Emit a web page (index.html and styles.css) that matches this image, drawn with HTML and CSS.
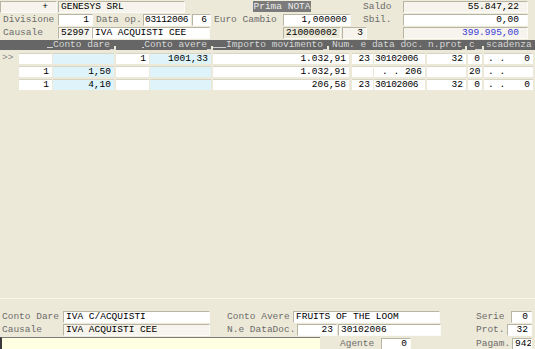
FILE: index.html
```html
<!DOCTYPE html>
<html lang="it">
<head>
    <meta charset="UTF-8">
    <title>Prima NOTA</title>
    <link rel="stylesheet" href="styles.css">
</head>
<body>
    <div class="testata">
        <!-- riga ditta -->
        <div class="riga">
            <div class="fld chiaro r w-plus">+</div>
            <div class="fld chiaro w-ditta">GENESYS SRL</div>
            <div class="titolo">Prima NOTA</div>
            <div class="lbl w-saldo">Saldo</div>
            <div class="fld chiaro r w-tot">55.847,22</div>
        </div>
        <!-- riga divisione -->
        <div class="riga">
            <div class="lbl w-lab">Divisione</div>
            <div class="fld r w-div">1</div>
            <div class="lbl w-dataop">Data op.</div>
            <div class="fld data w-data">03112006</div>
            <div class="fld r w-sei">6</div>
            <div class="lbl w-cambio">Euro Cambio</div>
            <div class="fld r w-valcambio">1,000000</div>
            <div class="lbl w-sbil">Sbil.</div>
            <div class="fld r w-tot">0,00</div>
        </div>
        <!-- riga causale -->
        <div class="riga">
            <div class="lbl w-lab">Causale</div>
            <div class="fld chiaro w-caus">52997</div>
            <div class="fld w-desc">IVA ACQUISTI CEE</div>
            <div class="fld grigio r w-conto">210000002</div>
            <div class="fld chiaro r w-tre">3</div>
            <div class="fld chiaro blu r w-tot">399.995,00</div>
        </div>
    </div>

    <!-- intestazione griglia -->
    <div class="intest">
        <div class="seg seg-a"><i></i><span>Conto dare</span><b></b></div>
        <div class="seg seg-b"><i></i><span>Conto avere</span><b></b></div>
        <div class="seg seg-c"><i></i><span>Importo movimento</span><b></b></div>
        <div class="seg seg-d"><span>Num. e data doc.</span></div>
        <div class="seg seg-e"><span>n.prot</span><b></b></div>
        <div class="seg seg-f"><span>c</span><b></b></div>
        <div class="seg seg-g"><span>scadenza</span></div>
    </div>

    <!-- righe movimenti -->
    <div class="griglia">
        <div class="grow">
            <div class="gut">&gt;&gt;</div>
            <div class="cell c1 r"></div>
            <div class="cell cy c2 r"></div>
            <div class="cell c3 r">1</div>
            <div class="cell cy c4 r">1001,33</div>
            <div class="cell c5 r">1.032,91</div>
            <div class="cell c6 r">23</div>
            <div class="cell data c7">30102006</div>
            <div class="cell c8 r">32</div>
            <div class="cell c9 r">0</div>
            <div class="cell c10 scad"><span>. .</span><span>0</span></div>
        </div>
        <div class="grow">
            <div class="gut"></div>
            <div class="cell c1 r">1</div>
            <div class="cell cy c2 r">1,50</div>
            <div class="cell c3 r"></div>
            <div class="cell cy c4 r"></div>
            <div class="cell c5 r">1.032,91</div>
            <div class="cell c6 r"></div>
            <div class="cell c7 r">. . 206</div>
            <div class="cell c8 r"></div>
            <div class="cell c9 r">20</div>
            <div class="cell c10 scad"><span>. .</span><span></span></div>
        </div>
        <div class="grow">
            <div class="gut"></div>
            <div class="cell c1 r">1</div>
            <div class="cell cy c2 r">4,10</div>
            <div class="cell c3 r"></div>
            <div class="cell cy c4 r"></div>
            <div class="cell c5 r">206,58</div>
            <div class="cell c6 r">23</div>
            <div class="cell data c7">30102006</div>
            <div class="cell c8 r">32</div>
            <div class="cell c9 r">0</div>
            <div class="cell c10 scad"><span>. .</span><span>0</span></div>
        </div>
    </div>

    <!-- dettaglio riga corrente -->
    <div class="piede">
        <div class="riga">
            <div class="lbl w-plab">Conto Dare</div>
            <div class="fld w-pconto">IVA C/ACQUISTI</div>
            <div class="lbl w-plab2">Conto Avere</div>
            <div class="fld w-pconto">FRUITS OF THE LOOM</div>
            <div class="lbl w-dx">Serie</div>
            <div class="fld r w-serie">0</div>
        </div>
        <div class="riga">
            <div class="lbl w-plab">Causale</div>
            <div class="fld chiaro w-pconto">IVA ACQUISTI CEE</div>
            <div class="lbl w-plab3">N.e DataDoc.</div>
            <div class="fld r w-ndoc">23</div>
            <div class="fld w-ddoc">30102006</div>
            <div class="lbl w-dx2">Prot.</div>
            <div class="fld r w-prot">32</div>
        </div>
        <div class="riga ultima">
            <div class="stato"></div>
            <div class="lbl w-agente">Agente</div>
            <div class="fld r w-ag">0</div>
            <div class="lbl w-dx3">Pagam.</div>
            <div class="fld r w-pag">942</div>
        </div>
    </div>
</body>
</html>
```

FILE: styles.css
```css
/* pagina */
body {
    margin: 0;
    width: 535px;
    height: 349px;
    overflow: hidden;
    display: flex;
    flex-direction: column;
    background-color: #ece9d8;
    font-family: "Liberation Mono", "Courier New", monospace;
    font-size: 9.5px;
    color: #000;
}

/* righe dei campi */
.testata {
    padding-top: 1px;
}

.riga {
    display: flex;
    height: 12px;
    margin-bottom: 1px;
}

.lbl {
    color: #6c6c6c;
    line-height: 12px;
    white-space: pre;
    box-sizing: border-box;
    padding-left: 3px;
    flex-shrink: 0;
}

.fld {
    box-sizing: border-box;
    height: 12px;
    line-height: 10px;
    padding: 0 3px 0 2px;
    background-color: #fff;
    border: 1px solid;
    border-color: #b9b5a5 #fbfbf8 #fbfbf8 #b9b5a5;
    white-space: pre;
    overflow: hidden;
    flex-shrink: 0;
}

.chiaro {
    background-color: #f6f4ec;
}

.grigio {
    background-color: #ece9d8;
}

.blu {
    color: #3a3ad8;
}

.r {
    text-align: right;
}

/* date a maschera, più strette */
.data {
    letter-spacing: -0.3px;
    padding-left: 1px;
    padding-right: 0;
}

.titolo {
    width: 58px;
    margin-left: 68px;
    background-color: #7b7b7b;
    color: #ececec;
    text-align: center;
    line-height: 11px;
    height: 11px;
    white-space: nowrap;
}

/* larghezze testata */
.w-plus { width: 57px; padding-right: 8px; }
.w-ditta { width: 127px; margin-left: 1px; }
.w-saldo { width: 92px; padding-left: 52px; }
.w-tot { width: 125px; padding-right: 8px; }
.w-lab { width: 58px; }
.w-div { width: 35px; }
.w-dataop { width: 50px; }
.w-data { width: 48px; }
.w-sei { width: 19px; margin-left: 1px; }
.w-cambio { width: 72px; }
.w-valcambio { width: 68px; }
.w-sbil { width: 52px; padding-left: 12px; }
.w-caus { width: 34px; }
.w-desc { width: 118px; }
.w-conto { width: 58px; margin-left: 73px; }
.w-tre { width: 25px; margin-left: 1px; }
.blu.w-tot { margin-left: 36px; }

/* intestazione griglia */
.intest {
    display: flex;
    height: 10px;
    background-color: #666;
    color: #d6d6d6;
    line-height: 9px;
}

.seg {
    display: flex;
    align-items: flex-end;
    box-sizing: border-box;
}

.seg span {
    line-height: 9px;
    align-self: flex-start;
    white-space: pre;
}

.seg i {
    flex: 1;
    border-bottom: 1px solid #cfcfcf;
    margin-bottom: 2px;
}

.seg b {
    width: 4px;
    height: 3px;
    border-bottom: 1px solid #cfcfcf;
    border-right: 2px solid #ece9d8;
}

.seg-a { width: 116px; padding-left: 47px; }
.seg-b { width: 97px; padding-left: 26px; }
.seg-c { width: 116px; }
.seg-d { width: 97px; padding-left: 3px; }
.seg-e { width: 41px; padding-left: 2px; }
.seg-f { width: 17px; padding-left: 2px; }
.seg-e b, .seg-f b { flex: 1; }
.seg-g { width: 51px; padding-left: 2px; }

/* righe griglia */
.griglia {
    padding-top: 1px;
}

.grow {
    display: flex;
    height: 11px;
    margin-top: 2px;
}

.gut {
    width: 19px;
    color: #8a8a8a;
    line-height: 10px;
    padding-left: 2px;
    box-sizing: border-box;
}

.cell {
    box-sizing: border-box;
    height: 11px;
    line-height: 10px;
    padding: 0 3px 0 1px;
    background-color: #fff;
    border-top: 1px solid #d8d5c6;
    white-space: pre;
    overflow: hidden;
}

.cy {
    background-color: #def4fa;
}

.c1 { width: 33px; }
.c2 { width: 61px; margin-left: 1px; }
.c3 { width: 33px; margin-left: 2px; }
.c4 { width: 61px; margin-left: 1px; }
.c5 { width: 136px; margin-left: 2px; }
.c6 { width: 21px; margin-left: 3px; }
.c7 { width: 51px; margin-left: 1px; }
.c8 { width: 39px; margin-left: 2px; }
.c9 { width: 14px; margin-left: 2px; padding-right: 2px; }
.c10 { width: 49px; margin-left: 2px; }

.scad {
    display: flex;
    justify-content: space-between;
    padding-left: 4px;
}

/* dettaglio in basso */
.piede {
    margin-top: auto;
    height: 51px;
    box-sizing: border-box;
    border-top: 1px solid #f7f6ef;
    padding-top: 12px;
}

.w-plab { width: 63px; padding-left: 2px; }
.w-pconto { width: 147px; }
.w-plab2 { width: 83px; padding-left: 17px; }
.w-plab3 { width: 87px; padding-left: 17px; }
.w-ndoc { width: 40px; }
.w-ddoc { width: 103px; margin-left: 1px; }
.w-dx { width: 71px; padding-left: 36px; }
.w-serie { width: 21px; }
.w-dx2 { width: 66px; padding-left: 35px; }
.w-prot { width: 25px; }

.ultima {
    height: 14px;
    margin-bottom: 0;
}

.ultima .lbl,
.ultima .fld {
    margin-top: 1px;
}

.stato {
    width: 320px;
    height: 14px;
    box-sizing: border-box;
    background-color: #ffffe1;
    border-top: 1px solid #7a7a7a;
    border-left: 2px solid #3a3a3a;
    flex-shrink: 0;
}

.w-agente { width: 61px; padding-left: 20px; }
.w-ag { width: 30px; }
.w-dx3 { width: 101px; padding-left: 65px; }
.w-pag { width: 20px; padding-right: 2px; }
```
